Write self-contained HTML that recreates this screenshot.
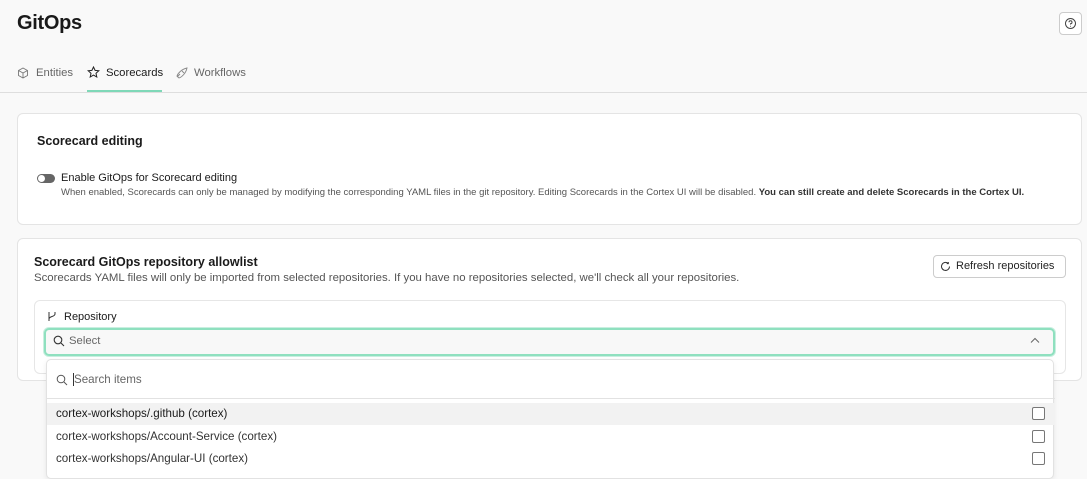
<!DOCTYPE html>
<html><head><style>
*{box-sizing:border-box;margin:0;padding:0}
body{width:1087px;height:473px;overflow:hidden;background:#f9f9f9;font-family:"Liberation Sans",sans-serif;color:#1a1a1a;position:relative}
.a{position:absolute}
.card{position:absolute;background:#fff;border:1px solid #e4e4e4;border-radius:6px}
.cb{position:absolute;left:985px;width:13px;height:13px;border:1px solid #777;border-radius:2px;background:#fff}
.it{position:absolute;left:0;width:1008px;height:22px;font-size:11.6px;color:#333;padding-left:9px;line-height:22px}
</style></head><body>
<div class="a" style="left:17px;top:12px;font-size:20px;font-weight:bold;letter-spacing:-0.3px">GitOps</div>
<div class="a" style="left:1059px;top:12px;width:23px;height:23px;border:1px solid #ccc;border-radius:4px;background:#fff"><svg width="21" height="21" viewBox="0 0 21 21"><circle cx="10.5" cy="10.5" r="5" fill="none" stroke="#444" stroke-width="1"/><path d="M9 9.2a1.5 1.5 0 1 1 1.5 1.5v.8" fill="none" stroke="#444" stroke-width="1"/><circle cx="10.5" cy="13.2" r=".5" fill="#444"/></svg></div>
<svg class="a" style="left:17px;top:67px" width="12" height="12" viewBox="0 0 12 12"><path d="M6 1 10.5 3.5v5L6 11 1.5 8.5v-5zM1.5 3.5 6 6l4.5-2.5M6 6v5" fill="none" stroke="#777" stroke-width=".9"/></svg>
<div class="a" style="left:36px;top:67px;font-size:11.3px;color:#666">Entities</div>
<svg class="a" style="left:87px;top:66px" width="13" height="13" viewBox="0 0 13 13"><path d="M6.5 1l1.6 3.4 3.7.4-2.8 2.5.8 3.7-3.3-1.9-3.3 1.9.8-3.7L1.2 4.8l3.7-.4z" fill="none" stroke="#222" stroke-width="1"/></svg>
<div class="a" style="left:106px;top:67px;font-size:11.3px;color:#1a1a1a">Scorecards</div>
<div class="a" style="left:87px;top:90px;width:75px;height:2px;background:#7fd8b8"></div>
<svg class="a" style="left:175px;top:67px" width="13" height="12" viewBox="0 0 13 12"><path d="M2 10l3-3M4 11c3-1 7-5 8-10C7 2 3 6 2 9zM7 4l2 2" fill="none" stroke="#888" stroke-width=".9"/></svg>
<div class="a" style="left:194px;top:67px;font-size:11.3px;color:#666">Workflows</div>
<div class="a" style="left:0;top:92px;width:1087px;height:1px;background:#dedede"></div>

<div class="card" style="left:17px;top:113px;width:1065px;height:112px">
<div class="a" style="left:19px;top:20px;font-size:12.5px;font-weight:bold">Scorecard editing</div>
<div class="a" style="left:19px;top:60px;width:18px;height:9px;border-radius:5px;background:#666"><div class="a" style="left:1px;top:1px;width:7px;height:7px;border-radius:50%;background:#fff"></div></div>
<div class="a" style="left:43px;top:58px;font-size:11px">Enable GitOps for Scorecard editing</div>
<div class="a" style="left:43px;top:73px;font-size:9.5px;color:#555;white-space:nowrap">When enabled, Scorecards can only be managed by modifying the corresponding YAML files in the git repository. Editing Scorecards in the Cortex UI will be disabled. <b style="color:#333">You can still create and delete Scorecards in the Cortex UI.</b></div>
</div>

<div class="card" style="left:17px;top:238px;width:1065px;height:143px">
<div class="a" style="left:16px;top:16px;font-size:12.5px;font-weight:bold">Scorecard GitOps repository allowlist</div>
<div class="a" style="left:16px;top:33px;font-size:11.4px;color:#555;white-space:nowrap">Scorecards YAML files will only be imported from selected repositories. If you have no repositories selected, we'll check all your repositories.</div>
<div class="a" style="left:915px;top:16px;width:133px;height:23px;border:1px solid #ccc;border-radius:4px;font-size:11px;line-height:21px;padding-left:22px;color:#222">Refresh repositories
<svg class="a" style="left:6px;top:5px" width="11" height="11" viewBox="0 0 11 11"><path d="M9.5 5.5A4 4 0 1 1 8 2.3M8.3 1v1.6H6.7" fill="none" stroke="#333" stroke-width="1"/></svg></div>
<div class="a" style="left:16px;top:61px;width:1032px;height:74px;border:1px solid #e6e6e6;border-radius:6px"></div>
<svg class="a" style="left:29px;top:72px" width="10" height="11" viewBox="0 0 10 11"><path d="M2 1v9M2 8c0-3 6-2 6-5M8 1v2" fill="none" stroke="#333" stroke-width="1"/></svg>
<div class="a" style="left:46px;top:72px;font-size:11px">Repository</div>
</div>
<div class="a" style="left:44px;top:328px;width:1011px;height:28px;border:2px solid #8fe0bf;border-radius:5px;background:#f8f8f8;box-shadow:0 0 0 1px #c9efe0"></div>
<svg class="a" style="left:53px;top:335px" width="12" height="12" viewBox="0 0 12 12"><circle cx="5" cy="5" r="3.8" fill="none" stroke="#333" stroke-width="1.1"/><path d="M8 8l3 3" stroke="#333" stroke-width="1.1"/></svg>
<div class="a" style="left:69px;top:335px;font-size:11.3px;color:#666">Select</div>
<svg class="a" style="left:1030px;top:337px" width="10" height="7" viewBox="0 0 10 7"><path d="M1 5.5 5 1.5l4 4" fill="none" stroke="#666" stroke-width="1"/></svg>

<div class="a" style="left:46px;top:359px;width:1008px;height:120px;background:#fff;border:1px solid #e2e2e2;border-radius:5px;box-shadow:0 2px 6px rgba(0,0,0,.08)">
<svg class="a" style="left:9px;top:14px" width="12" height="12" viewBox="0 0 12 12"><circle cx="5" cy="5" r="3.8" fill="none" stroke="#555" stroke-width="1"/><path d="M8 8l3 3" stroke="#555" stroke-width="1"/></svg>
<div class="a" style="left:26px;top:13px;width:1px;height:13px;background:#333"></div>
<div class="a" style="left:27px;top:13px;font-size:11.6px;color:#666">Search items</div>
<div class="a" style="left:0;top:38px;width:1008px;height:1px;background:#e2e2e2"></div>
<div class="it" style="top:43px;background:#f2f2f2;color:#1a1a1a">cortex-workshops/.github (cortex)</div>
<div class="it" style="top:66px">cortex-workshops/Account-Service (cortex)</div>
<div class="it" style="top:88px">cortex-workshops/Angular-UI (cortex)</div>
<div class="cb" style="top:47px"></div>
<div class="cb" style="top:70px"></div>
<div class="cb" style="top:92px"></div>
</div>
</body></html>
